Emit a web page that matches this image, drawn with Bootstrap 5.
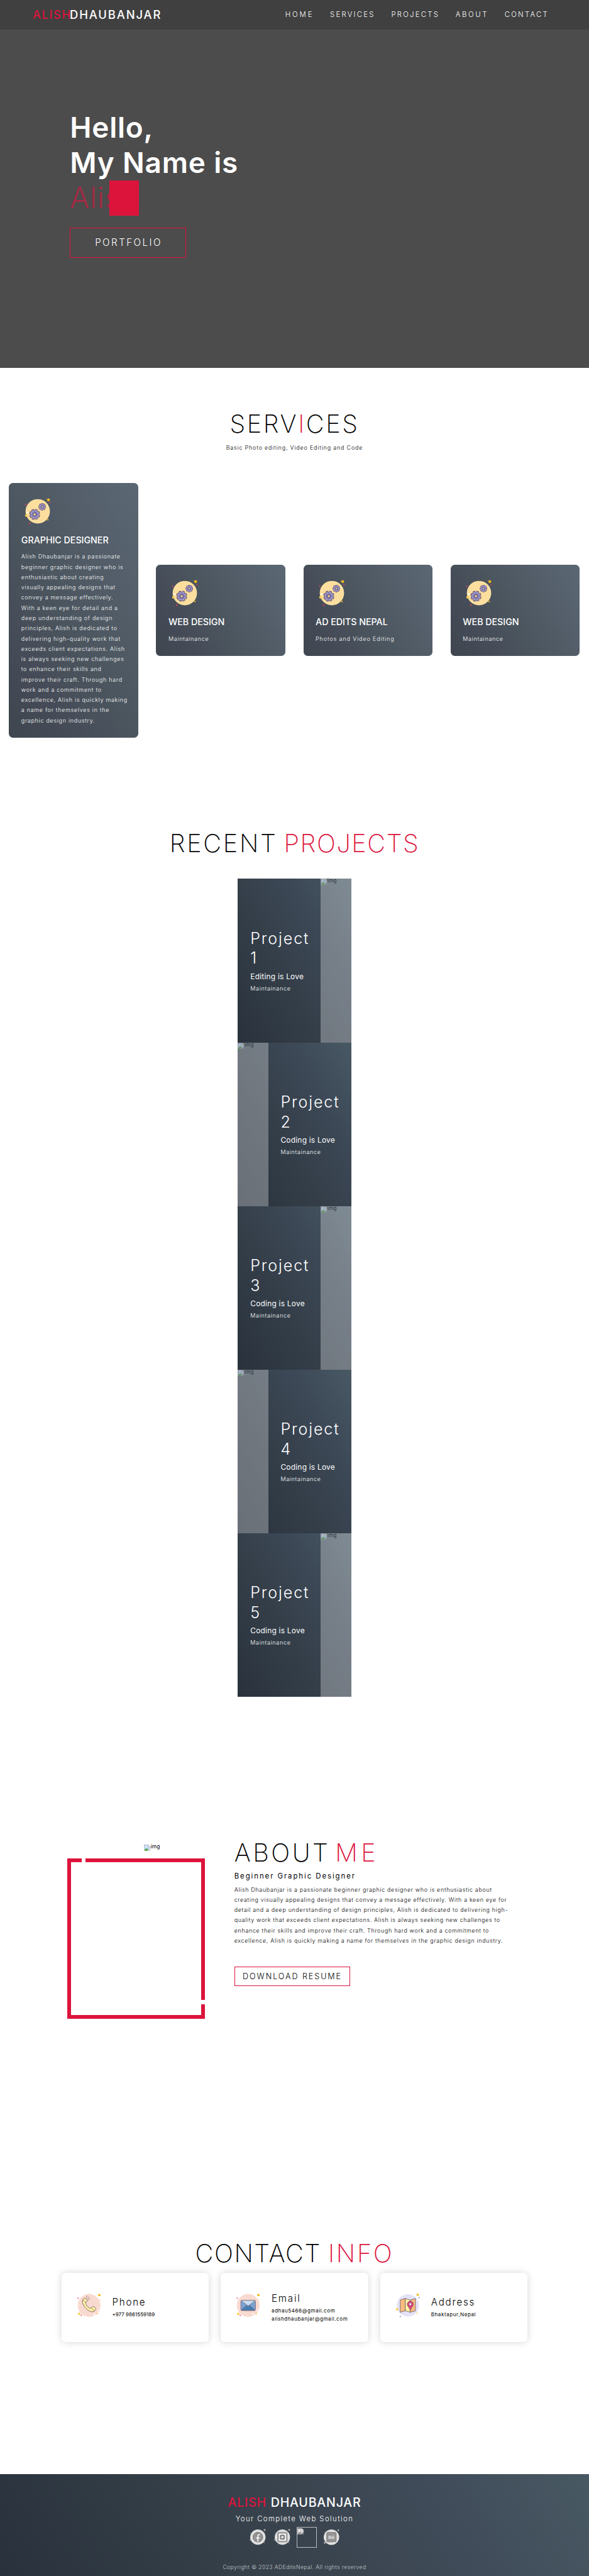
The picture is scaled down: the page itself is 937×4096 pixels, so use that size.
<!DOCTYPE html>
<html lang="en">
<head>
<meta charset="utf-8">
<meta name="viewport" content="width=device-width, initial-scale=1">
<title>Alish Dhaubanjar</title>
<link href="https://cdn.jsdelivr.net/npm/bootstrap@5.3.0/dist/css/bootstrap.min.css" rel="stylesheet">
<style>
html{font-size:6.505px}
body{font-family:Inter,"Open Sans",sans-serif;font-size:1.38rem;line-height:2.5rem;font-weight:400;color:#000;background:#fff;overflow-x:hidden}
h1,h2,h3,p{margin:0;white-space:nowrap}
a{text-decoration:none;color:inherit}
svg{display:block;flex:none}
.icon-sm{width:1.6rem;height:1.6rem}
.icon-md{width:5rem;height:5rem}
.icon-lg{width:7rem;height:7rem}
.icon-xl{width:8rem;height:8rem}
.crim{color:#dc143c}
.hero{height:90rem;background:#4c4c4c;color:#fff}
.topbar{height:7.2rem;background:#404040;padding:0 9.85rem 0 8rem}
.brandname{font-size:2.83rem;line-height:7.2rem;font-weight:500;letter-spacing:.101em;white-space:nowrap}
.brandname .crim{letter-spacing:.083em;margin-right:-.4rem}
.menu{gap:3.96rem;font-size:1.75rem;line-height:7.2rem;font-weight:300;letter-spacing:.195em}
.menu a:first-child{letter-spacing:.25em}
.menu a:nth-child(4){letter-spacing:.226em}
.intro{padding:19.7rem 0 0 17.1rem}
.intro h1{font-size:7.05rem;line-height:8.6rem;font-weight:600;letter-spacing:.018em}
.intro .typed{font-weight:300;color:#a32a44;letter-spacing:.025em}
.curtain{left:9.7rem;top:0;width:7.2rem;height:8.6rem;background:#dc143c}
.cta{display:block;width:28.4rem;height:7.4rem;margin-top:3rem;border:.2rem solid #dc143c;font-size:2.33rem;line-height:7rem;font-weight:300;letter-spacing:.163em;text-indent:.3rem;text-align:center}
.sect-title{font-size:6.1rem;line-height:7.5rem;font-weight:200;padding-top:.1rem;margin-bottom:-.1rem}
.sect-title span{letter-spacing:.04em}
.services{padding-top:9.8rem}
.services .sect-title,.services .sect-title span{letter-spacing:.065em}
.tagline{margin-top:.95rem;font-weight:300;letter-spacing:.09em}
.svc-row{margin-top:7.25rem;padding:0 2.2rem;gap:4.4rem}
.svc{width:31.6rem;padding:3rem;border-radius:1rem;color:#fff;background:linear-gradient(60deg,#40464f 0%,#454b57 22%,#4b555e 45%,#545f6b 75%,#5b6873 100%)}
.svc h2{font-size:2.2rem;line-height:2.8rem;font-weight:500;margin-top:1.68rem;letter-spacing:-.003em}
.svc p{margin-top:1.41rem;font-weight:300;letter-spacing:.08em}
.svc p.wider{letter-spacing:.098em}
.projects{padding-top:21.95rem}
.projects .recent{letter-spacing:.069em}
.projects .sect-title .crim{margin-left:-.2rem}
.proj-list{margin-top:5rem}
.proj{width:27.7rem;height:40rem;color:#fff;background:linear-gradient(60deg,#29323c 0%,#343e49 40%,#3d4957 72%,#485964 100%)}
.proj-info{width:20.3rem;padding:.2rem 0 0 3.05rem}
.proj-info h1{font-size:3.85rem;line-height:4.9rem;font-weight:300;letter-spacing:.075em}
.proj-info h2{font-size:1.84rem;line-height:2.3rem;font-weight:400;margin-top:.83rem;letter-spacing:.018em}
.proj-info p{margin-top:.47rem;font-weight:300;letter-spacing:.079em}
.proj-img{width:7.4rem;background:rgba(255,255,255,.3);color:#303a44;font-size:1.3rem;line-height:1.2rem}
.proj-img svg{opacity:.5}
.about{padding:34.2rem 0 0 16.47rem;gap:7.13rem}
.about .sect-title span{letter-spacing:.088em}
.about .sect-title .crim{margin-left:-.5rem;letter-spacing:.134em}
.alt{padding:1.8rem 0 0 18.8rem;height:5.2rem;font-size:1.3rem;line-height:1.2rem}
.frame{width:33.7rem;height:39.3rem;border:1rem solid #dc143c}
.frame:before,.frame:after{content:"";position:absolute;background:#fff;width:1rem;height:1rem}
.frame:before{left:2.56rem;top:-1rem}
.frame:after{right:-1rem;bottom:2.7rem}
.about h2{font-size:1.75rem;line-height:2.2rem;font-weight:400;margin-top:.96rem;letter-spacing:.17em}
.bio{margin-top:.99rem;font-weight:300;letter-spacing:.0725em}
.resume{display:block;width:28.4rem;height:4.8rem;margin-top:5.05rem;border:.2rem solid #dc143c;font-size:1.93rem;line-height:4.5rem;font-weight:300;letter-spacing:.157em;text-align:center}
.contact{padding-top:53.5rem}
.contact .sect-title .crim{letter-spacing:.068em}
.info-row{gap:3rem;margin-top:1rem}
.info{width:36rem;height:17rem;border-radius:1rem;padding-left:3.2rem;box-shadow:0 0 1.8rem rgba(0,0,0,.17)}
.info svg{margin:0 2.2rem 1rem 0}
.info div{padding-top:.2rem}
.info h2{font-size:2.33rem;line-height:2.8rem;font-weight:300;letter-spacing:.118em}
.info p{font-size:1.24rem;line-height:2rem;margin-top:.59rem;letter-spacing:.07em}
.info .phone-no{letter-spacing:0}
.foot{margin-top:32.3rem;height:24.9rem;padding-top:5.1rem;color:#fff;background:linear-gradient(60deg,#29323c 0%,#343e47 33%,#3a444f 52%,#414d5b 78%,#485963 100%)}
.foot .brandname{font-size:3.02rem;line-height:3.6rem;letter-spacing:.04em}
.foot .brandname .crim{letter-spacing:.04em;margin-right:.1rem}
.foot h2{font-size:1.75rem;line-height:2.2rem;font-weight:300;margin-top:1.06rem;letter-spacing:.122em}
.social{gap:1rem;margin-top:.94rem}
.missing{width:5rem;height:5rem;border:1px solid #b9bcc0;padding:.1rem}
.missing svg{filter:grayscale(1)}
.copy{font-size:1.32rem;line-height:2rem;margin-top:3.85rem;color:#c4c8cc;font-weight:300;letter-spacing:.05em}
</style>
</head>
<body>
<svg width="0" height="0" class="position-absolute" aria-hidden="true">
<defs>
<g id="gear">
<g stroke="#51364c"><path d="M0-13.2V13.2M-13.2 0H13.2M-9.3-9.3 9.3 9.3M9.3-9.3-9.3 9.3" stroke-width="6.4"/><circle r="10.8" stroke="none" fill="#51364c"/></g>
<g stroke="#9c97cc"><path d="M0-12.1V12.1M-12.1 0H12.1M-8.5-8.5 8.5 8.5M8.5-8.5-8.5 8.5" stroke-width="4.4"/><circle r="9.9" stroke="none" fill="#9c97cc"/></g>
<circle r="6" fill="#8581b8" stroke="#5d5486"/><circle r="3.2" fill="#fcdf9f" stroke="#51364c" stroke-width="1.1"/>
</g>
<symbol id="gears" viewBox="0 0 80 80">
<circle cx="40" cy="40" r="29.8" fill="#fcdf9f"/>
<use href="#gear" transform="translate(32.5 47.6) rotate(20)"/><use href="#gear" transform="translate(50.9 29) scale(.69)"/>
<g fill="#e0405e"><circle cx="10.4" cy="23.3" r="1.7"/><circle cx="69.4" cy="19.3" r="1.6"/><circle cx="20" cy="69.6" r="1.8"/></g>
<g fill="#f2b81c"><circle cx="66.4" cy="12" r="3.5"/><circle cx="61.6" cy="10.4" r=".9"/><circle cx="64.7" cy="60.6" r="1.8"/></g>
<g fill="#f9cb51"><circle cx="12" cy="50.3" r="3.2"/><circle cx="16.8" cy="53.5" r=".9"/></g>
<g fill="#fff"><circle cx="14.8" cy="42.9" r="2"/><circle cx="63.9" cy="27" r="1.1"/></g>
</symbol>
<symbol id="peach" viewBox="0 0 70 70">
<circle cx="35" cy="35" r="28" fill="#f9dad1"/>
<g fill="#ef4763"><circle cx="8.1" cy="17.3" r="1.5"/><circle cx="15.8" cy="59.3" r="1.6"/></g>
<g fill="#f3b91f"><circle cx="60.2" cy="9.7" r="2.9"/><circle cx="56" cy="8.2" r=".8"/><circle cx="61.3" cy="21" r=".9"/></g>
<g fill="#fccb52"><circle cx="10.8" cy="55.7" r="2.9"/><circle cx="55.3" cy="55" r="1.7"/></g>
<g fill="#fff"><circle cx="47.2" cy="56" r="2.1"/><circle cx="57" cy="46.7" r="1.6"/><circle cx="10" cy="33.3" r="1"/></g>
</symbol>
<symbol id="broken" viewBox="0 0 16 16">
<path d="M.5 15.5V.5H10.5L15.5 5V10L9.5 15.5Z" fill="#c3d9f7" stroke="#a3a7ab"/>
<path d="M10.5.5V5H15.5" fill="#fff" stroke="#a3a7ab"/>
<path d="M3 6.2C3 4.6 5 4.3 5.4 5.2 7 5 7 6.6 6.5 6.8H3.5Z" fill="#fff"/>
<path d="M1 15C2 11.5 4.5 9.5 7 9.5 8.6 9.5 9.8 10.4 10.6 12L8 15Z" fill="#53a838"/>
<path d="M16 12V16H12Z" fill="#a3a7ab"/>
</symbol>
<symbol id="disc" viewBox="0 0 50 50">
<circle cx="25" cy="25" r="18.7" fill="#e0e0e0"/>
<g fill="#b9b9b9"><circle cx="41.6" cy="7.4" r="2.2"/><circle cx="38" cy="6.4" r=".6"/><circle cx="7.3" cy="31.6" r="2"/><circle cx="40.3" cy="38" r="1.2"/></g>
<g fill="#777"><circle cx="6.5" cy="14.5" r=".9"/><circle cx="43.3" cy="12.2" r="1"/><circle cx="12.5" cy="43.5" r="1"/></g>
<g fill="#fff"><circle cx="9" cy="26.7" r="1.3"/><circle cx="39.6" cy="16.8" r=".8"/></g>
</symbol>
</defs>
</svg>

<header class="hero">
<nav class="topbar d-flex justify-content-between">
<a class="brandname" href="#"><span class="crim">ALISH</span><span>DHAUBANJAR</span></a>
<div class="menu d-flex"><a href="#">HOME</a><a href="#">SERVICES</a><a href="#">PROJECTS</a><a href="#">ABOUT</a><a href="#">CONTACT</a></div>
</nav>
<div class="intro">
<h1>Hello,</h1>
<h1>My Name is</h1>
<h1 class="typed position-relative">Alish<span class="curtain position-absolute"></span></h1>
<a class="cta" href="#">PORTFOLIO</a>
</div>
</header>

<section class="services">
<h1 class="sect-title text-center">SERV<span class="crim">I</span>CES</h1>
<p class="tagline text-center">Basic Photo editing, Video Editing and Code</p>
<div class="svc-row d-flex align-items-center">
<article class="svc"><svg class="icon-xl"><use href="#gears"/></svg><h2>GRAPHIC DESIGNER</h2>
<p>Alish Dhaubanjar is a passionate<br>beginner graphic designer who is<br>enthusiastic about creating<br>visually appealing designs that<br>convey a message effectively.<br>With a keen eye for detail and a<br>deep understanding of design<br>principles, Alish is dedicated to<br>delivering high-quality work that<br>exceeds client expectations. Alish<br>is always seeking new challenges<br>to enhance their skills and<br>improve their craft. Through hard<br>work and a commitment to<br>excellence, Alish is quickly making<br>a name for themselves in the<br>graphic design industry.</p></article>
<article class="svc"><svg class="icon-xl"><use href="#gears"/></svg><h2>WEB DESIGN</h2><p>Maintainance</p></article>
<article class="svc"><svg class="icon-xl"><use href="#gears"/></svg><h2>AD EDITS NEPAL</h2><p class="wider">Photos and Video Editing</p></article>
<article class="svc"><svg class="icon-xl"><use href="#gears"/></svg><h2>WEB DESIGN</h2><p>Maintainance</p></article>
</div>
</section>

<section class="projects">
<h1 class="sect-title text-center"><span class="recent">RECENT</span> <span class="crim">PROJECTS</span></h1>
<div class="proj-list d-flex flex-column align-items-center">
<div class="proj d-flex"><div class="proj-info d-flex flex-column justify-content-center"><h1>Project<br>1</h1><h2>Editing is Love</h2><p>Maintainance</p></div><div class="proj-img d-flex"><svg class="icon-sm"><use href="#broken"/></svg>img</div></div>
<div class="proj d-flex flex-row-reverse"><div class="proj-info d-flex flex-column justify-content-center"><h1>Project<br>2</h1><h2>Coding is Love</h2><p>Maintainance</p></div><div class="proj-img d-flex"><svg class="icon-sm"><use href="#broken"/></svg>img</div></div>
<div class="proj d-flex"><div class="proj-info d-flex flex-column justify-content-center"><h1>Project<br>3</h1><h2>Coding is Love</h2><p>Maintainance</p></div><div class="proj-img d-flex"><svg class="icon-sm"><use href="#broken"/></svg>img</div></div>
<div class="proj d-flex flex-row-reverse"><div class="proj-info d-flex flex-column justify-content-center"><h1>Project<br>4</h1><h2>Coding is Love</h2><p>Maintainance</p></div><div class="proj-img d-flex"><svg class="icon-sm"><use href="#broken"/></svg>img</div></div>
<div class="proj d-flex"><div class="proj-info d-flex flex-column justify-content-center"><h1>Project<br>5</h1><h2>Coding is Love</h2><p>Maintainance</p></div><div class="proj-img d-flex"><svg class="icon-sm"><use href="#broken"/></svg>img</div></div>
</div>
</section>

<section class="about d-flex">
<div><div class="alt d-flex"><svg class="icon-sm"><use href="#broken"/></svg>img</div><div class="frame position-relative"></div></div>
<div>
<h1 class="sect-title"><span>ABOUT</span> <span class="crim">ME</span></h1>
<h2>Beginner Graphic Designer</h2>
<p class="bio">Alish Dhaubanjar is a passionate beginner graphic designer who is enthusiastic about<br>creating visually appealing designs that convey a message effectively. With a keen eye for<br>detail and a deep understanding of design principles, Alish is dedicated to delivering high-<br>quality work that exceeds client expectations. Alish is always seeking new challenges to<br>enhance their skills and improve their craft. Through hard work and a commitment to<br>excellence, Alish is quickly making a name for themselves in the graphic design industry.</p>
<a class="resume" href="#">DOWNLOAD RESUME</a>
</div>
</section>

<section class="contact">
<h1 class="sect-title text-center"><span>CONTACT</span> <span class="crim">INFO</span></h1>
<div class="info-row d-flex justify-content-center">
<div class="info d-flex align-items-center"><svg class="icon-lg" viewBox="0 0 70 70"><use href="#peach"/><path d="M24 17.4C26 16.8 30.8 21 30.7 23.2 30.6 25.2 26.5 27.2 26.6 29.4 27 34.5 33.5 41.3 38.3 42 40.5 42 41.3 37.6 44.3 37.8 47.3 38.2 51.3 41 51.6 43.6 51.6 46.6 46.5 50.8 43 50.8 33 50.6 18.8 36 18.4 25 18.4 21.8 21.3 18 24 17.4Z" fill="#fdf3a6" stroke="#6b4a56" stroke-width="1.2" stroke-linejoin="round"/><path d="M41.5 42.3C44 43.5 46 46 46.5 49M20 22C22 22.5 25 25 26.6 28M28.4 15.5 30 12M30.5 18.8 34.5 14.3M32.6 21.3 36.3 18.8" fill="none" stroke="#6b4a56" stroke-linecap="round"/></svg><div><h2>Phone</h2><p class="phone-no">+977 9861559189</p></div></div>
<div class="info d-flex align-items-center"><svg class="icon-lg" viewBox="0 0 70 70"><use href="#peach"/><g stroke="#74525f" stroke-width="1"><rect x="17" y="22.4" width="36" height="25" rx="3" fill="#79a3d2"/><path d="M18 46.5 32 34.5H38L52 46.5Q51 47.4 50 47.4H20Q18.7 47.4 18 46.5Z" fill="#447fb4"/><path d="M18 23.3Q19 22.4 20 22.4H50Q51.3 22.4 52 23.3L35 36.5Z" fill="#c5dcf0"/></g></svg><div><h2>Email</h2><p>adhau5466@gmail.com<br>alishdhaubanjar@gmail.com</p></div></div>
<div class="info d-flex align-items-center"><svg class="icon-lg" viewBox="0 0 70 70"><circle cx="35.3" cy="35" r="27.2" fill="#e3e2f8"/><g stroke="#5f4250" stroke-width="1.1" stroke-linejoin="round"><path d="M16.6 21.7 28.8 18V48L16.6 51.7Z" fill="#f9bd80"/><path d="M28.8 18 40.7 22V51.7L28.8 48Z" fill="#fdf3a6"/><path d="M40.7 22 53.7 18V48L40.7 51.7Z" fill="#f9bd80"/><path d="M41.1 46.7C39 40.5 33.8 37 33.8 32A7.3 7.3 0 0 1 48.4 32C48.4 37 43.2 40.5 41.1 46.7Z" fill="#e64583"/><circle cx="41.1" cy="32" r="3.2" fill="#fff"/></g><g fill="#f5bb24"><circle cx="59.5" cy="9" r="3"/><circle cx="55.3" cy="7.6" r=".9"/></g><g fill="#fccb52"><circle cx="9" cy="44.7" r="3"/><circle cx="58" cy="54.3" r="1.6"/></g><g fill="#8682bb"><circle cx="62.5" cy="15.7" r="1.5"/><circle cx="16.6" cy="62.3" r="1.5"/></g><circle cx="56.8" cy="22.7" r="1.3" fill="#fff"/></svg><div><h2>Address</h2><p>Bhaktapur,Nepal</p></div></div>
</div>
</section>

<footer class="foot d-flex flex-column align-items-center">
<div class="brandname"><span class="crim">ALISH</span> <span>DHAUBANJAR</span></div>
<h2>Your Complete Web Solution</h2>
<div class="social d-flex">
<svg class="icon-md" viewBox="0 0 50 50"><use href="#disc"/><circle cx="25" cy="25" r="12" fill="#929292" stroke="#6f6f6f" stroke-width="1.4"/><path d="M30 19.2C27 18.2 25 19.2 25 22V36.6M20.5 26.8H29.8" fill="none" stroke="#fff" stroke-width="2.4"/></svg>
<svg class="icon-md" viewBox="0 0 50 50"><use href="#disc"/><rect x="13.2" y="13.2" width="23.6" height="23.6" rx="3" fill="#aaa" stroke="#6f6f6f"/><rect x="15.8" y="15.8" width="18.4" height="18.4" rx="1.5" fill="#fff" stroke="#888" stroke-width=".8"/><rect x="19" y="19" width="12" height="12" rx="3" fill="#777"/><circle cx="25" cy="25" r="4.2" fill="#999"/><circle cx="25" cy="25" r="2.2" fill="#fff"/></svg>
<div class="missing"><svg class="icon-sm"><use href="#broken"/></svg></div>
<svg class="icon-md" viewBox="0 0 50 50"><circle cx="25" cy="25" r="18.9" fill="#e0e0e0"/><g fill="#b9b9b9"><circle cx="42" cy="8" r="2"/><circle cx="8.5" cy="39" r="2.1"/></g><g fill="#777"><circle cx="7" cy="13" r="1"/><circle cx="12" cy="41.5" r=".9"/></g><g fill="#fff"><circle cx="32" cy="39" r="1.4"/><circle cx="42" cy="22.5" r=".9"/><circle cx="8.5" cy="26" r=".9"/></g><rect x="13.4" y="13.4" width="23.2" height="23.2" rx="2.6" fill="#939393" stroke="#6f6f6f" stroke-width="1.2"/><text x="25" y="29.6" text-anchor="middle" font-size="12.5" fill="#fff" font-family="Liberation Sans, sans-serif">Be</text><path d="M27.8 19.8H31.2" stroke="#fff"/></svg>
</div>
<p class="copy">Copyright © 2023 ADEditsNepal. All rights reserved</p>
</footer>
<script src="https://cdn.jsdelivr.net/npm/bootstrap@5.3.0/dist/js/bootstrap.bundle.min.js"></script>
</body>
</html>
